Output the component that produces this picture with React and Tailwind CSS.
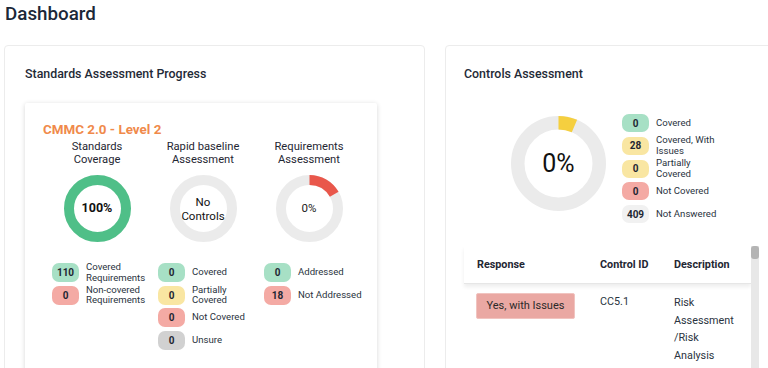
import React from "react";

function Donut({ size, stroke, pct, color, track = "#ebebeb", full = false, children }) {
  const r = (size - stroke) / 2;
  const c = 2 * Math.PI * r;
  return (
    <div className="relative shrink-0" style={{ width: size, height: size }}>
      <svg width={size} height={size} className="block">
        <circle cx={size / 2} cy={size / 2} r={r} fill="none" stroke={full ? color : track} strokeWidth={stroke} />
        {!full && pct > 0 && (
          <circle
            cx={size / 2}
            cy={size / 2}
            r={r}
            fill="none"
            stroke={color}
            strokeWidth={stroke}
            strokeDasharray={`${c * pct} ${c}`}
            transform={`rotate(-90 ${size / 2} ${size / 2})`}
          />
        )}
      </svg>
      <div className="absolute inset-0 flex items-center justify-center text-center">{children}</div>
    </div>
  );
}

const badgeColors = {
  green: "bg-[#a7e0c5]",
  red: "bg-[#f4aaa4]",
  yellow: "bg-[#f9e6a2]",
  gray: "bg-[#d1d1d1]",
  light: "bg-[#f1f1f1]",
};

function LegendRow({ n, color, label, h = "h-[19px]" }) {
  return (
    <div className={`flex items-center ${h}`}>
      <div className={`w-[27px] ${h} shrink-0 rounded-[7px] ${badgeColors[color]} flex items-center justify-center text-[10px] font-bold text-[#1f2733]`}>
        {n}
      </div>
      <div className="ml-[7px] whitespace-nowrap text-[9.6px] leading-[10.5px] text-[#2a3340]">{label}</div>
    </div>
  );
}

function Column({ title, donut, rows }) {
  return (
    <div className="w-[106px] flex flex-col">
      <div className="text-center text-[11.2px] leading-[13px] text-[#1f2733] h-[26px]">{title}</div>
      <div className="flex justify-center mt-[9px]">{donut}</div>
      <div className="mt-[21px] pl-[8px] flex flex-col gap-[3.6px]">
        {rows.map((r, i) => (
          <LegendRow key={i} {...r} />
        ))}
      </div>
    </div>
  );
}

export default function App() {
  return (
    <div
      className="w-[768px] h-[368px] overflow-hidden bg-white text-[#1f2733]"
      style={{ fontFamily: "Roboto, 'Liberation Sans', sans-serif" }}
    >
      <div className="px-[5px] h-[28px] text-[18.8px] leading-[28px] font-medium text-[#1b2838]">Dashboard</div>
      <div className="flex gap-[20px] pl-[4px] mt-[17px]">
        {/* Left card */}
        <div className="w-[421px] h-[340px] shrink-0 border border-[#ececec] rounded-[4px] pl-[20px] pt-[20px]">
          <div className="text-[12.4px] leading-[16px] font-medium text-[#1f2a37] h-[16px]">Standards Assessment Progress</div>
          <div className="mt-[21px] w-[352px] h-[300px] bg-white rounded-[2px] shadow-[0_1px_5px_rgba(0,0,0,0.16)] pt-[18px]">
            <div className="pl-[18px] text-[13.4px] leading-[17px] font-bold text-[#f08a4b]">CMMC 2.0 - Level 2</div>
            <div className="flex pl-[19px] mt-[2px]">
              <Column
                title={<>Standards<br />Coverage</>}
                donut={
                  <Donut size={67} stroke={10} full color="#4fbf88">
                    <span className="text-[12.5px] font-bold text-[#111]">100%</span>
                  </Donut>
                }
                rows={[
                  { n: "110", color: "green", label: <>Covered<br />Requirements</> },
                  { n: "0", color: "red", label: <>Non-covered<br />Requirements</> },
                ]}
              />
              <Column
                title={<>Rapid baseline<br />Assessment</>}
                donut={
                  <Donut size={67} stroke={10} pct={0} color="#ebebeb">
                    <span className="text-[11.5px] leading-[14px] text-[#111]">No<br />Controls</span>
                  </Donut>
                }
                rows={[
                  { n: "0", color: "green", label: "Covered" },
                  { n: "0", color: "yellow", label: <>Partially<br />Covered</> },
                  { n: "0", color: "red", label: "Not Covered" },
                  { n: "0", color: "gray", label: "Unsure" },
                ]}
              />
              <Column
                title={<>Requirements<br />Assessment</>}
                donut={
                  <Donut size={67} stroke={10} pct={1 / 6} color="#e9574b">
                    <span className="text-[11.5px] text-[#222]">0%</span>
                  </Donut>
                }
                rows={[
                  { n: "0", color: "green", label: "Addressed" },
                  { n: "18", color: "red", label: "Not Addressed" },
                ]}
              />
            </div>
          </div>
        </div>

        {/* Right card */}
        <div className="w-[340px] h-[340px] shrink-0 border border-[#ececec] rounded-[4px] pl-[18px] pt-[20px]">
          <div className="text-[12.4px] leading-[16px] font-medium text-[#1f2a37] h-[16px]">Controls Assessment</div>
          <div className="flex items-start pl-[47px] mt-[27px]">
            <div className="mt-[7px]">
              <Donut size={95} stroke={13.5} pct={0.064} color="#f5cf3f">
                <span className="text-[25px] font-normal text-[#111]">0%</span>
              </Donut>
            </div>
            <div className="ml-[16px] mt-[5px] flex flex-col gap-[4.8px]">
              <LegendRow h="h-[18px]" n="0" color="green" label="Covered" />
              <LegendRow h="h-[18px]" n="28" color="yellow" label={<>Covered, With<br />Issues</>} />
              <LegendRow h="h-[18px]" n="0" color="yellow" label={<>Partially<br />Covered</>} />
              <LegendRow h="h-[18px]" n="0" color="red" label="Not Covered" />
              <LegendRow h="h-[18px]" n="409" color="light" label="Not Answered" />
            </div>
          </div>
          <div className="flex mt-[23px]">
            <div className="w-[287px]">
              <div className="flex h-[38px] items-center border-b border-[#e6e6e6] shadow-[0_3px_4px_rgba(0,0,0,0.07)] text-[10.8px] font-bold text-[#1f2733]">
                <div className="w-[123px] pl-[13px]">Response</div>
                <div className="w-[74px] pl-[13px]">Control ID</div>
                <div className="flex-1 pl-[13px]">Description</div>
              </div>
              <div className="flex pt-[9px] text-[10.8px] leading-[17.5px] text-[#2a3340]">
                <div className="w-[123px] pl-[12px]">
                  <div className="w-[99px] h-[26px] flex items-center justify-center bg-[#eaa8a3] border border-[#f1c4c0] rounded-[2px] text-[11px] text-[#2a2a2a]">
                    Yes, with Issues
                  </div>
                </div>
                <div className="w-[74px] pl-[13px]">CC5.1</div>
                <div className="flex-1 pl-[13px] pt-[1px]">
                  Risk
                  <br />
                  Assessment
                  <br />
                  /Risk
                  <br />
                  Analysis
                </div>
              </div>
            </div>
            <div className="w-[8px] h-[130px] bg-[#e8e8e8]">
              <div className="h-[13px] w-[8px] rounded-[3px] bg-[#b4b4b4]" />
            </div>
          </div>
        </div>
      </div>
    </div>
  );
}
